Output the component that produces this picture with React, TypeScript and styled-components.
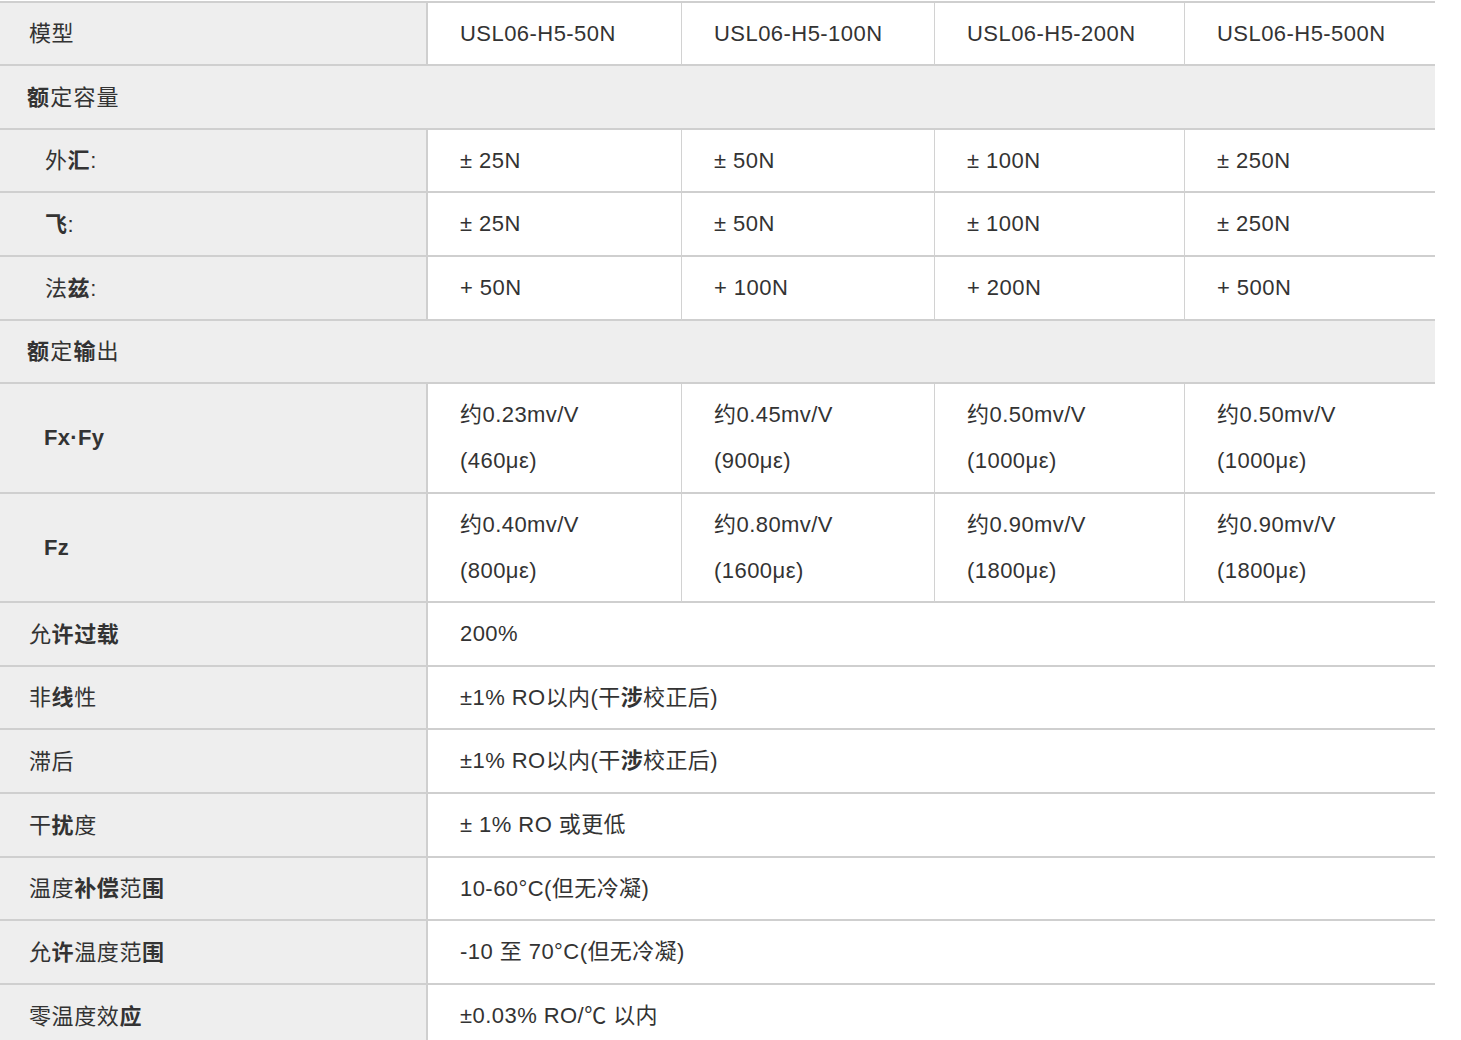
import React from "react";
import styled, { createGlobalStyle } from "styled-components";

const Global = createGlobalStyle`
  html, body { margin: 0; padding: 0; background: #ffffff; }
  body { font-family: "Liberation Sans", "Noto Sans CJK SC", sans-serif; color: #333333; }
`;

const Page = styled.div`
  padding-top: 1px;
  width: 1461px;
`;

const Table = styled.table`
  width: 1435px;
  border-collapse: separate;
  border-spacing: 0;
  table-layout: fixed;
  border-top: 2px solid #cfcfcf;
  font-size: 22px;
  letter-spacing: 0.45px;
  color: #333333;
`;

const Row = styled.tr<{ $h: number }>`
  height: ${(p) => p.$h}px;
`;

const Label = styled.th<{ $indent?: boolean; $latinBold?: boolean }>`
  background: #eeeeee;
  border-right: 2px solid #cfcfcf;
  border-bottom: 2px solid #cfcfcf;
  text-align: left;
  vertical-align: middle;
  padding: 0 0 ${(p) => (p.$latinBold ? "0" : "5px")} ${(p) => (p.$latinBold ? "44px" : p.$indent ? "45px" : "29px")};
  font-weight: ${(p) => (p.$latinBold ? 700 : 400)};
  letter-spacing: ${(p) => (p.$latinBold ? "0.3px" : "0.6px")};
  white-space: nowrap;
  box-sizing: border-box;
`;

const Section = styled.th`
  background: #eeeeee;
  border-bottom: 2px solid #cfcfcf;
  text-align: left;
  vertical-align: middle;
  padding: 0 0 5px 27px;
  font-weight: 400;
  letter-spacing: 1.2px;
`;

const Cell = styled.td<{ $first?: boolean; $lift?: boolean }>`
  border-bottom: 2px solid #cfcfcf;
  border-left: ${(p) => (p.$first ? "0" : "1px solid #d2d2d2")};
  vertical-align: middle;
  padding: 0 0 ${(p) => (p.$lift ? "6px" : "0")} 32px;
  white-space: nowrap;
  background: #ffffff;
`;

const Line = styled.div`
  line-height: 46px;
`;

const B = styled.b`
  font-weight: 700;
`;

const Cjk = styled.span`
  letter-spacing: 0.4px;
`;

const models = ["USL06-H5-50N", "USL06-H5-100N", "USL06-H5-200N", "USL06-H5-500N"];

const capacity: [React.ReactNode, string[]][] = [
  [<>外<B>汇</B>:</>, ["± 25N", "± 50N", "± 100N", "± 250N"]],
  [<><B>飞</B>:</>, ["± 25N", "± 50N", "± 100N", "± 250N"]],
  [<>法<B>兹</B>:</>, ["+ 50N", "+ 100N", "+ 200N", "+ 500N"]],
];

const outputs: [string, [string, string][]][] = [
  [
    "Fx·Fy",
    [
      ["约0.23mv/V", "(460με)"],
      ["约0.45mv/V", "(900με)"],
      ["约0.50mv/V", "(1000με)"],
      ["约0.50mv/V", "(1000με)"],
    ],
  ],
  [
    "Fz",
    [
      ["约0.40mv/V", "(800με)"],
      ["约0.80mv/V", "(1600με)"],
      ["约0.90mv/V", "(1800με)"],
      ["约0.90mv/V", "(1800με)"],
    ],
  ],
];

const specs: [React.ReactNode, React.ReactNode, number, boolean][] = [
  [<>允<B>许过载</B></>, "200%", 64, false],
  [<>非<B>线</B>性</>, <>±1% RO<Cjk>以内(干<B>涉</B>校正后)</Cjk></>, 63, true],
  [<>滞后</>, <>±1% RO<Cjk>以内(干<B>涉</B>校正后)</Cjk></>, 64, true],
  [<>干<B>扰</B>度</>, <>± 1% RO <Cjk>或更低</Cjk></>, 64, true],
  [<>温度<B>补偿</B>范<B>围</B></>, <>10-60°C<Cjk>(但无冷凝)</Cjk></>, 63, true],
  [<>允<B>许</B>温度范<B>围</B></>, <>-10 至 70°C<Cjk>(但无冷凝)</Cjk></>, 64, true],
  [<>零温度效<B>应</B></>, <>±0.03% RO/℃ <Cjk>以内</Cjk></>, 64, true],
];

export default function App() {
  return (
    <Page>
      <Global />
      <Table>
        <colgroup>
          <col style={{ width: 428 }} />
          <col style={{ width: 253 }} />
          <col style={{ width: 253 }} />
          <col style={{ width: 250 }} />
          <col style={{ width: 251 }} />
        </colgroup>
        <tbody>
          <Row $h={63}>
            <Label>模型</Label>
            {models.map((m, i) => (
              <Cell key={m} $first={i === 0}>{m}</Cell>
            ))}
          </Row>
          <Row $h={64}>
            <Section colSpan={5}>
              <B>额</B>定容量
            </Section>
          </Row>
          {capacity.map(([label, vals], r) => (
            <Row key={r} $h={[63, 64, 64][r]}>
              <Label $indent>{label}</Label>
              {vals.map((v, i) => (
                <Cell key={i} $first={i === 0}>{v}</Cell>
              ))}
            </Row>
          ))}
          <Row $h={63}>
            <Section colSpan={5}>
              <B>额</B>定<B>输</B>出
            </Section>
          </Row>
          {outputs.map(([label, vals], r) => (
            <Row key={label} $h={r === 0 ? 110 : 109}>
              <Label $latinBold>{label}</Label>
              {vals.map(([a, b], i) => (
                <Cell key={i} $first={i === 0}>
                  <Line>{a}</Line>
                  <Line>{b}</Line>
                </Cell>
              ))}
            </Row>
          ))}
          {specs.map(([label, val, h, lift], r) => (
            <Row key={r} $h={h}>
              <Label>{label}</Label>
              <Cell $first $lift={lift} colSpan={4}>{val}</Cell>
            </Row>
          ))}
        </tbody>
      </Table>
    </Page>
  );
}
